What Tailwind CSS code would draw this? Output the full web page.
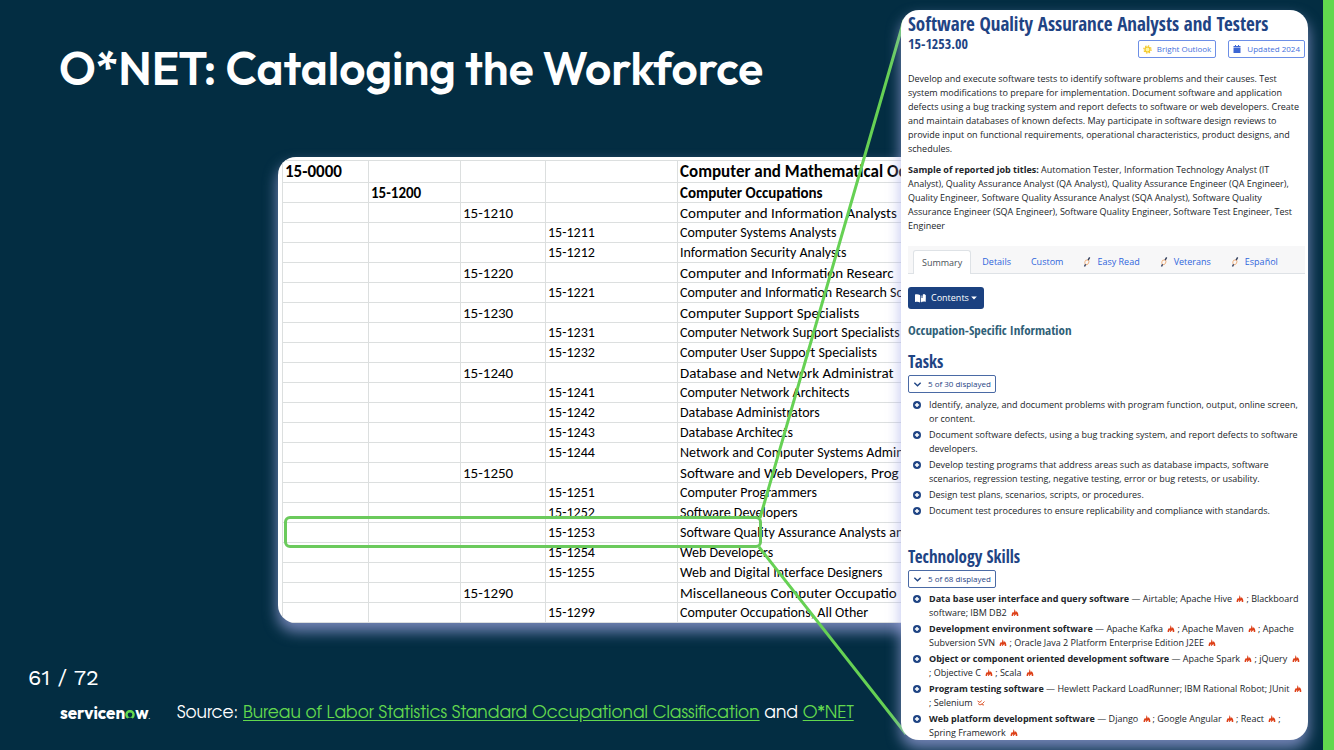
<!DOCTYPE html>
<html lang="en">
<head>
<meta charset="utf-8">
<meta name="viewport" content="width=device-width, initial-scale=1">
<title>O*NET: Cataloging the Workforce</title>
<script src="https://cdn.jsdelivr.net/npm/@tailwindcss/browser@4"></script>
</head>
<body class="bg-[#032d42]">
<svg class="hidden" aria-hidden="true">
  <symbol id="plus" viewBox="0 0 16 16"><circle cx="8" cy="8" r="8" fill="#1f4484"/><path d="M8 3.800v8.400M3.800 8h8.400" stroke="#fff" stroke-width="3"/></symbol>
  <symbol id="flame" viewBox="0 0 14 14"><path d="M5.500 0C7.500 2.500 8.500 4.500 8.200 7l1.800-2.500C12.500 6.500 14.300 9.500 13.500 14h-3c.3-1.700-.2-3-1.300-4C8.800 11.500 7.500 12 6.500 14H5c.8-2 .6-3-.2-4C4 11 3.200 12 3.200 14H.3C0 10.500 1.200 7.500 3 6l1 1.500C5.500 5.500 6 3 5.500 0z" fill="#dd4018"/></symbol>
  <symbol id="link" viewBox="0 0 14 18"><path d="M4.500 6C2.500 9 2.500 12 5 13.500S10 12 10.500 8.500 8 5 4.500 6z" fill="none" stroke="#eea56a" stroke-width="1.600"/><path d="M9 5.500 11.800.8M4.500 13 2.500 17.200" stroke="#34405f" stroke-width="2.600"/></symbol>
  <symbol id="chev" viewBox="0 0 10 10"><path d="M1.500 3 5 6.500 8.500 3" fill="none" stroke="#1f4484" stroke-width="1.500"/></symbol>
</svg>
<main class="relative flex min-h-screen overflow-hidden">
  <section class="flex min-w-0 flex-1 flex-col">
    <h1 class="pt-9 pl-[59px] font-['Outfit',sans-serif] text-[46px] leading-[64px] font-semibold whitespace-nowrap text-white">O*NET: Cataloging the Workforce</h1>

    <div class="mt-[57px] -mr-5 ml-[278px] overflow-hidden rounded-l-[18px] bg-white pt-[3px] pl-1 shadow-[0_8px_14px_1px_rgb(164_170_231/0.68)]">
      <table class="w-full table-fixed border-collapse border-t border-[#dcdfdf] font-['Carlito','Calibri',sans-serif] leading-[18px] whitespace-nowrap text-black [&_td]:border-b [&_td]:border-l [&_td]:border-[#dcdfdf] [&_td]:p-0 [&_td]:pl-[2px]">
        <colgroup><col class="w-[86px]"><col class="w-[92px]"><col class="w-[85px]"><col class="w-[132px]"><col></colgroup>
        <tbody id="soc"></tbody>
      </table>
    </div>

    <p class="mt-[41px] pl-7 font-['Work_Sans',sans-serif] text-[22px] leading-7 text-white">61 / 72</p>
    <footer class="mt-[9px] flex items-center pl-[60px] whitespace-nowrap text-white">
      <div class="flex w-[117px] items-center font-['Outfit',sans-serif] text-[17px] leading-6 font-bold" aria-label="servicenow">servicen<svg class="mt-[3px] h-[9px] w-[10px]" viewBox="0 0 20 18"><path d="M4.500 17A9.500 9.500 0 1 1 15.500 17C12 14.200 8 14.200 4.500 17zM10 5a4.700 4.700 0 1 0 0 9.400A4.700 4.700 0 0 0 10 5z" fill="#62d84e" fill-rule="evenodd"/></svg>w<span class="mt-2 text-[5px] leading-none">.</span></div>
      <p class="font-['TeX_Gyre_Adventor','Questrial',sans-serif] text-[17px] leading-6">Source: <a href="#soc" class="text-[#62d84e] underline underline-offset-2">Bureau of Labor Statistics Standard Occupational Classification</a> and <a href="#onet" class="text-[#62d84e] underline underline-offset-2">O*NET</a></p>
    </footer>
  </section>

  <!-- highlighted row and connector lines, drawn over the spreadsheet -->
  <div class="absolute top-[516px] left-[284px] h-8 w-[478px] rounded-md border-[3px] border-[#6bca5c]"></div>
  <svg class="absolute top-0 left-0 h-[750px] w-[910px]" viewBox="0 0 910 750" fill="none" stroke="#66d154" stroke-width="3" aria-hidden="true"><path d="M760 518 904 20M759 547 906 734"/></svg>

  <aside id="onet" class="relative mt-[10px] mb-[9px] w-[407px] shrink-0 self-start rounded-[18px] bg-white pt-[2px] pr-[3px] pl-[7px] font-['Open_Sans',sans-serif] text-[9px] leading-[14px] text-[#212529] shadow-[0_8px_14px_1px_rgb(164_170_231/0.68)]">
    <h2 class="font-['Open_Sans_Condensed',sans-serif] text-[19px] leading-6 font-bold text-[#1f4484]">Software Quality Assurance Analysts and Testers</h2>
    <div class="flex items-start justify-between">
      <span class="font-['Open_Sans_Condensed',sans-serif] text-sm leading-4 font-bold text-[#1f4484]">15-1253.00</span>
      <div class="mt-1 flex gap-3 text-[8px] leading-none text-[#4571dc]">
        <a href="#onet" class="flex h-[18px] items-center gap-[5px] rounded-[2px] border border-[#6d8fe6] px-1"><svg class="size-[9px]" viewBox="0 0 16 16"><circle cx="8" cy="8" r="4.500" fill="#fff6a0" stroke="#f3c51d" stroke-width="2"/><circle cx="8" cy="8" r="6.500" fill="none" stroke="#f3c51d" stroke-width="2" stroke-dasharray="2.550"/></svg>Bright Outlook</a>
        <a href="#onet" class="flex h-[18px] items-center gap-[6px] rounded-[2px] border border-[#6d8fe6] px-1"><svg class="size-2" viewBox="0 0 16 16"><path d="M1 2h3V0h2v2h4V0h2v2h3v3H1zM1 6h14v10H1z" fill="#3c66d4"/></svg>Updated 2024</a>
      </div>
    </div>
    <p class="mt-[14px]">Develop and execute software tests to identify software problems and their causes. Test system modifications to prepare for implementation. Document software and application defects using a bug tracking system and report defects to software or web developers. Create and maintain databases of known defects. May participate in software design reviews to provide input on functional requirements, operational characteristics, product designs, and schedules.</p>
    <p class="mt-[7px]"><b>Sample of reported job titles:</b> Automation Tester, Information Technology Analyst (IT Analyst), Quality Assurance Analyst (QA Analyst), Quality Assurance Engineer (QA Engineer), Quality Engineer, Software Quality Assurance Analyst (SQA Analyst), Software Quality Assurance Engineer (SQA Engineer), Software Quality Engineer, Software Test Engineer, Test Engineer</p>
    <nav class="mt-[13px] flex h-7 items-end gap-5 border-b border-[#dee2e6] bg-[#f7f7f8] pl-[5px] text-[#2f66dc]">
      <a href="#onet" class="-mr-[9px] -mb-px flex h-6 items-center rounded-t-[3px] border border-b-0 border-[#dee2e6] bg-white px-2 text-[#495057]">Summary</a>
      <a href="#tasks" class="flex h-[22px] items-center">Details</a>
      <a href="#tasks" class="flex h-[22px] items-center">Custom</a>
      <a href="#tasks" class="flex h-[22px] items-center gap-[6px]"><svg class="h-[10px] w-2"><use href="#link"/></svg>Easy Read</a>
      <a href="#tasks" class="flex h-[22px] items-center gap-[6px]"><svg class="h-[10px] w-2"><use href="#link"/></svg>Veterans</a>
      <a href="#tasks" class="flex h-[22px] items-center gap-[6px]"><svg class="h-[10px] w-2"><use href="#link"/></svg>Español</a>
    </nav>
    <button type="button" class="mt-[13px] flex h-[22px] items-center rounded-[3px] bg-[#1b4180] px-[7px] text-white"><svg class="mr-[5px] h-[9px] w-[11px]" viewBox="0 0 22 18"><path d="M0 1c4-1 7-.5 10 1v15C7 15 4 15 0 16z" fill="#fff"/><path d="M12 3v13c3-1.500 6-1.500 9-1V2M16 1v8l2-2 2 2V1z" fill="#fff" stroke="#fff" stroke-width="1"/><path d="M13 1h2v7h-2z" fill="#1b4180"/></svg>Contents<svg class="ml-[2px] h-1 w-[6px]" viewBox="0 0 10 7"><path d="M0 1h10L5 6z" fill="#fff"/></svg></button>
    <p class="mt-[11px] font-['Open_Sans_Condensed',sans-serif] text-[13px] leading-5 font-bold text-[#2f6077]">Occupation-Specific Information</p>
    <h3 id="tasks" class="mt-[10px] font-['Open_Sans_Condensed',sans-serif] text-[17px] leading-6 font-bold text-[#1f4484]">Tasks</h3>
    <button type="button" class="mt-px flex h-[18px] items-center gap-[6px] rounded-[2px] border border-[#4a6aa5] px-1 text-[8px] leading-none text-[#1f4484]"><svg class="size-[9px]"><use href="#chev"/></svg>5 of 30 displayed</button>
    <ul class="mt-[5px] flex flex-col gap-[2px] pl-[21px] [&_li]:relative [&_li>svg:first-child]:absolute [&_li>svg:first-child]:top-[3px] [&_li>svg:first-child]:-left-4 [&_li>svg:first-child]:size-2">
      <li><svg><use href="#plus"/></svg>Identify, analyze, and document problems with program function, output, online screen, or content.</li>
      <li><svg><use href="#plus"/></svg>Document software defects, using a bug tracking system, and report defects to software developers.</li>
      <li><svg><use href="#plus"/></svg>Develop testing programs that address areas such as database impacts, software scenarios, regression testing, negative testing, error or bug retests, or usability.</li>
      <li><svg><use href="#plus"/></svg>Design test plans, scenarios, scripts, or procedures.</li>
      <li><svg><use href="#plus"/></svg>Document test procedures to ensure replicability and compliance with standards.</li>
    </ul>
    <h3 class="mt-[27px] font-['Open_Sans_Condensed',sans-serif] text-[17px] leading-6 font-bold text-[#1f4484]">Technology Skills</h3>
    <button type="button" class="mt-px flex h-[18px] items-center gap-[6px] rounded-[2px] border border-[#4a6aa5] px-1 text-[8px] leading-none text-[#1f4484]"><svg class="size-[9px]"><use href="#chev"/></svg>5 of 68 displayed</button>
    <ul class="mt-1 flex flex-col gap-[2px] pl-[21px] [&_li]:relative [&_li>svg:first-child]:absolute [&_li>svg:first-child]:top-[3px] [&_li>svg:first-child]:-left-4 [&_li>svg:first-child]:size-2 [&_i>svg]:mx-[2px] [&_i>svg]:inline [&_i>svg]:h-[7px] [&_i>svg]:w-2 [&_i>svg]:align-baseline">
      <li><svg><use href="#plus"/></svg><b>Data base user interface and query software</b> — Airtable; Apache Hive <i><svg><use href="#flame"/></svg></i>; Blackboard software; IBM DB2 <i><svg><use href="#flame"/></svg></i></li>
      <li><svg><use href="#plus"/></svg><b>Development environment software</b> — Apache Kafka <i><svg><use href="#flame"/></svg></i>; Apache Maven <i><svg><use href="#flame"/></svg></i>; Apache Subversion SVN <i><svg><use href="#flame"/></svg></i>; Oracle Java 2 Platform Enterprise Edition J2EE <i><svg><use href="#flame"/></svg></i></li>
      <li><svg><use href="#plus"/></svg><b>Object or component oriented development software</b> — Apache Spark <i><svg><use href="#flame"/></svg></i>; jQuery <i><svg><use href="#flame"/></svg></i><br>; Objective C <i><svg><use href="#flame"/></svg></i>; Scala <i><svg><use href="#flame"/></svg></i></li>
      <li><svg><use href="#plus"/></svg><b>Program testing software</b> — Hewlett Packard LoadRunner; IBM Rational Robot; JUnit <i><svg><use href="#flame"/></svg></i><br>; Selenium <i><svg viewBox="0 0 16 14"><path d="M1 4l5 3 3-4M2 9l4 3 5-3 4-4M9 11l5 1" fill="none" stroke="#dd5a30" stroke-width="2"/></svg></i></li>
      <li><svg><use href="#plus"/></svg><b>Web platform development software</b> — Django <i><svg><use href="#flame"/></svg></i>; Google Angular <i><svg><use href="#flame"/></svg></i>; React <i><svg><use href="#flame"/></svg></i>;<br>Spring Framework <i><svg><use href="#flame"/></svg></i></li>
    </ul>
  </aside>
  <div class="ml-[15px] w-[11px] shrink-0 bg-[#62d84e]"></div>
</main>
<script>
  // [level, code, title]; the level picks the column that holds the code
  const rows = [
    [0, '15-0000', 'Computer and Mathematical Occ'],
    [1, '15-1200', 'Computer Occupations'],
    [2, '15-1210', 'Computer and Information Analysts'],
    [3, '15-1211', 'Computer Systems Analysts'],
    [3, '15-1212', 'Information Security Analysts'],
    [2, '15-1220', 'Computer and Information Researc'],
    [3, '15-1221', 'Computer and Information Research Sc'],
    [2, '15-1230', 'Computer Support Specialists'],
    [3, '15-1231', 'Computer Network Support Specialists'],
    [3, '15-1232', 'Computer User Support Specialists'],
    [2, '15-1240', 'Database and Network Administrat'],
    [3, '15-1241', 'Computer Network Architects'],
    [3, '15-1242', 'Database Administrators'],
    [3, '15-1243', 'Database Architects'],
    [3, '15-1244', 'Network and Computer Systems Admin'],
    [2, '15-1250', 'Software and Web Developers, Prog'],
    [3, '15-1251', 'Computer Programmers'],
    [3, '15-1252', 'Software Developers'],
    [3, '15-1253', 'Software Quality Assurance Analysts an'],
    [3, '15-1254', 'Web Developers'],
    [3, '15-1255', 'Web and Digital Interface Designers'],
    [2, '15-1290', 'Miscellaneous Computer Occupatio'],
    [3, '15-1299', 'Computer Occupations, All Other']
  ];
  const styles = ['h-[22px] text-[17px] font-bold', 'h-5 text-[15px] font-bold', 'h-5 text-[15px]', 'h-5 text-[14px]'];
  document.getElementById('soc').innerHTML = rows.map(([level, code, title]) =>
    `<tr class="${styles[level]}">` + [0, 1, 2, 3].map(c => `<td>${c === level ? code : ''}</td>`).join('') + `<td>${title}</td></tr>`
  ).join('');
</script>
</body>
</html>
